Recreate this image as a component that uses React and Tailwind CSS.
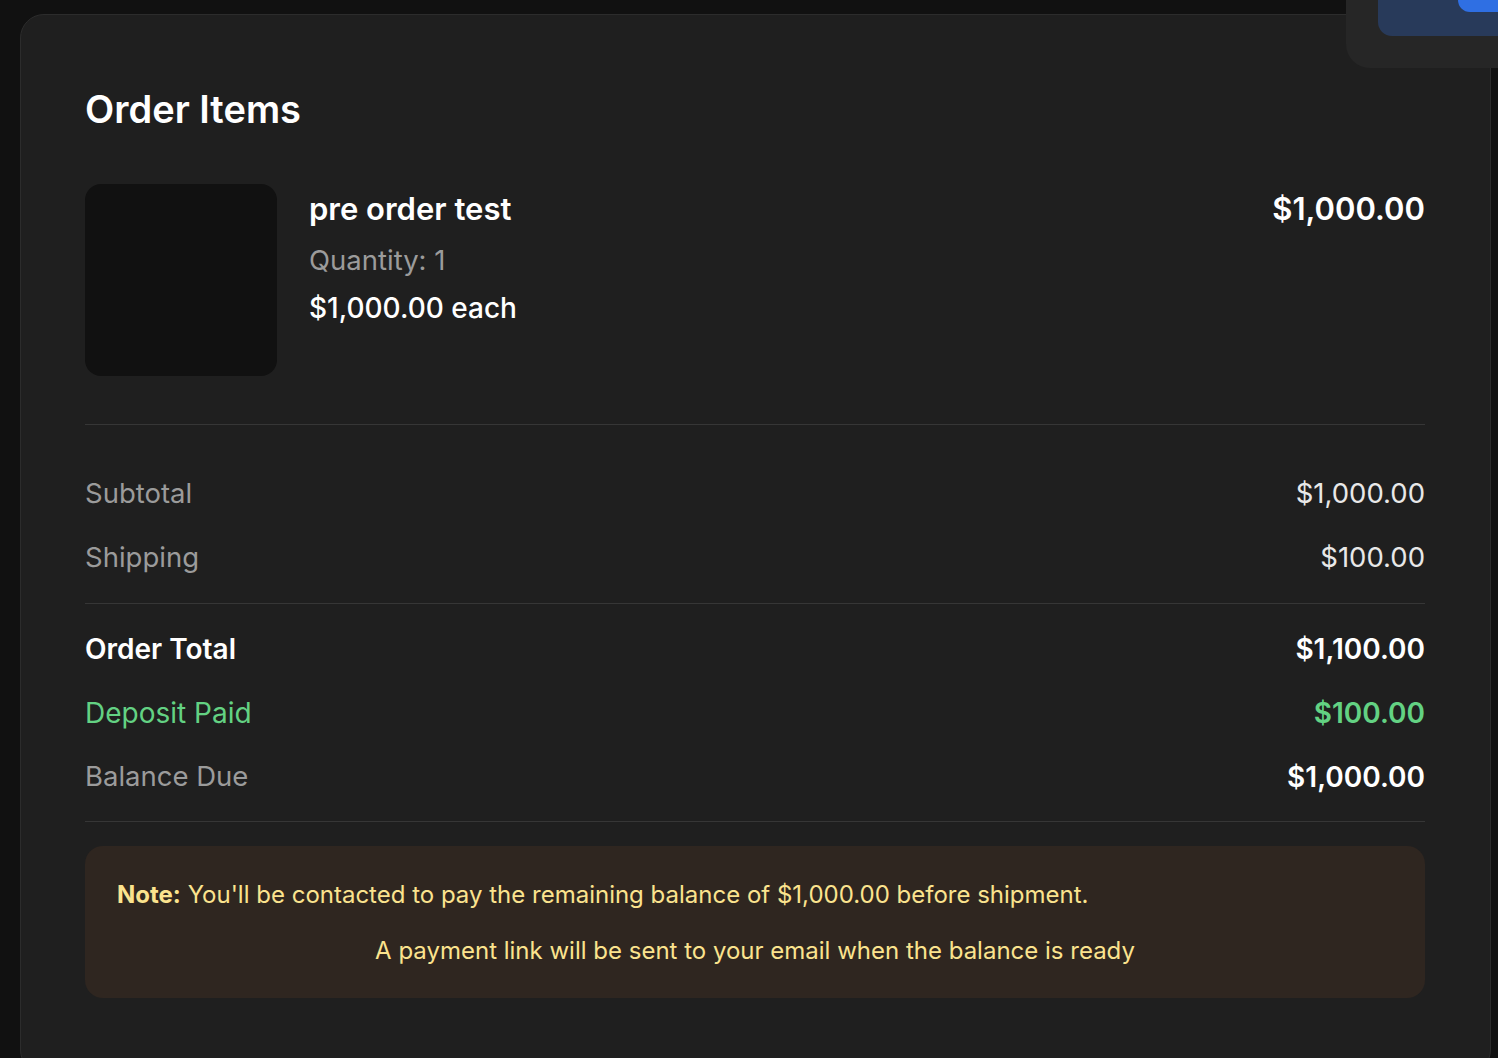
const rows = [
  { label: "Subtotal", value: "$1,000.00", labelCls: "text-[#9b9b9b]", valueCls: "text-[#e8e8e8]" },
  { label: "Shipping", value: "$100.00", labelCls: "text-[#9b9b9b]", valueCls: "text-[#e8e8e8]" },
];

const totals = [
  { label: "Order Total", value: "$1,100.00", labelCls: "text-white font-semibold text-[28px]", valueCls: "text-white font-semibold text-[28px]" },
  { label: "Deposit Paid", value: "$100.00", labelCls: "text-[#63d283] text-[28px]", valueCls: "text-[#63d283] font-semibold text-[28px]" },
  { label: "Balance Due", value: "$1,000.00", labelCls: "text-[#9b9b9b]", valueCls: "text-white font-semibold text-[28px]" },
];

const Row = ({ label, value, labelCls, valueCls }) => (
  <div className="flex items-center justify-between h-[64px] text-[27.5px]">
    <span className={labelCls}>{label}</span>
    <span className={valueCls}>{value}</span>
  </div>
);

export default function App() {
  return (
    <div className="relative min-h-[1058px] bg-[#111111] pt-[14px] pl-[20px] pr-[7px] overflow-hidden" style={{ fontFamily: "Inter, 'Noto Sans', sans-serif" }}>
      <div className="rounded-[24px] border border-[#2c2c2c] bg-[#1f1f1f] pl-[64px] pr-[65px] pt-[70px] pb-[60px] min-h-[1060px]">
        <h2 className="text-[38px] font-semibold text-white leading-[48px]">Order Items</h2>

        <div className="mt-[51px] flex items-start gap-[32px]">
          <div className="w-[192px] h-[192px] rounded-[16px] bg-[#111111] shrink-0" />
          <div className="flex-1 pt-[6px]">
            <div className="text-[31px] font-semibold text-white leading-[38px]">pre order test</div>
            <div className="mt-[14px] text-[27.5px] text-[#9b9b9b] leading-[36px]">Quantity: 1</div>
            <div className="mt-[12px] text-[28px] font-medium text-white leading-[36px]">$1,000.00 each</div>
          </div>
          <div className="pt-[6px] text-[31px] font-semibold text-white leading-[38px]">$1,000.00</div>
        </div>

        <div className="mt-[48px] border-t border-[#363636]" />

        <div className="pt-[37px] pb-[13px]">
          {rows.map((r) => (
            <Row key={r.label} {...r} />
          ))}
        </div>

        <div className="border-t border-[#363636]" />

        <div className="pt-[13px] pb-[12px]">
          {totals.map((r) => (
            <Row key={r.label} {...r} />
          ))}
        </div>

        <div className="border-t border-[#363636]" />

        <div className="mt-[24px] rounded-[18px] bg-[#2f2620] px-[32px] pt-[32px] pb-[30px] text-[#fbe38e] text-[24px]">
          <p className="leading-[34px]">
            <span className="font-bold">Note:</span> You'll be contacted to pay the remaining balance of $1,000.00 before shipment.
          </p>
          <p className="mt-[22px] leading-[34px] text-center">A payment link will be sent to your email when the balance is ready</p>
        </div>
      </div>

      <div className="absolute top-0 right-0 w-[152px] h-[68px] rounded-bl-[24px] bg-[#262626] pl-[32px]">
        <div className="h-[36px] rounded-bl-[14px] bg-[#283a5a] pl-[80px]">
          <div className="h-[12px] rounded-bl-[12px] bg-[#2f6fe3]" />
        </div>
      </div>
    </div>
  );
}
